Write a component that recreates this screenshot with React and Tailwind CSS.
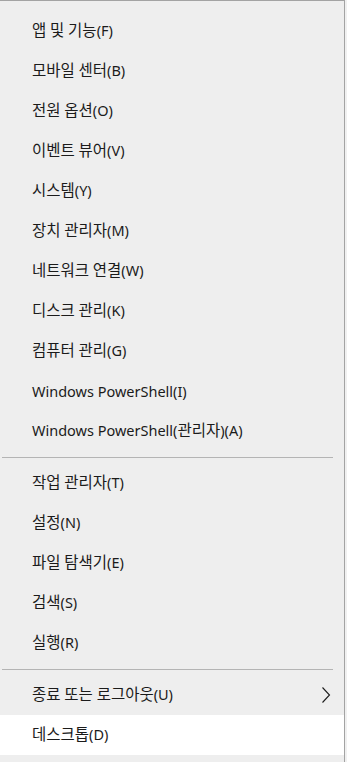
const groups = [
  [
    "앱 및 기능(F)",
    "모바일 센터(B)",
    "전원 옵션(O)",
    "이벤트 뷰어(V)",
    "시스템(Y)",
    "장치 관리자(M)",
    "네트워크 연결(W)",
    "디스크 관리(K)",
    "컴퓨터 관리(G)",
    "Windows PowerShell(I)",
    "Windows PowerShell(관리자)(A)",
  ],
  ["작업 관리자(T)", "설정(N)", "파일 탐색기(E)", "검색(S)", "실행(R)"],
];

// hangul renders a bit bigger than latin in the original menu font
function Label({ text }) {
  const parts = text.split(/([\uac00-\ud7a3]+)/).filter(Boolean);
  return (
    <span className="text-[14.5px] leading-none text-[#1b1b1b]">
      {parts.map((p, i) =>
        /[\uac00-\ud7a3]/.test(p) ? (
          <span key={i} className="text-[15.5px]">
            {p}
          </span>
        ) : (
          <span key={i}>{p}</span>
        )
      )}
    </span>
  );
}

function Item({ label, active, children }) {
  return (
    <div
      className={
        "flex h-10 items-center justify-between pl-8 pr-3 " +
        (active ? "bg-white" : "")
      }
    >
      <Label text={label} />
      {children}
    </div>
  );
}

function Separator() {
  return (
    <div className="flex h-3 items-center pl-[2px] pr-[11px]">
      <div className="h-px w-full bg-[#b4b4b4]" />
    </div>
  );
}

export default function App() {
  return (
    <div
      className="flex h-[762px] w-[347px] bg-[#f0f0f0]"
      style={{ fontFamily: '"Noto Sans", "Noto Sans CJK KR", sans-serif' }}
    >
      <div className="w-[345px] border-t border-r border-[#a3a3a3] bg-[#eeeeee] pt-[10px]">
        {groups[0].map((l) => (
          <Item key={l} label={l} />
        ))}
        <Separator />
        {groups[1].map((l) => (
          <Item key={l} label={l} />
        ))}
        <Separator />
        <Item label="종료 또는 로그아웃(U)">
          <svg width="10" height="18" viewBox="0 0 10 18" className="mr-[1px]">
            <path d="M1.5 1.5 L8.5 9 L1.5 16.5" fill="none" stroke="#1b1b1b" strokeWidth="1.1" />
          </svg>
        </Item>
        <Item label="데스크톱(D)" active />
      </div>
    </div>
  );
}
